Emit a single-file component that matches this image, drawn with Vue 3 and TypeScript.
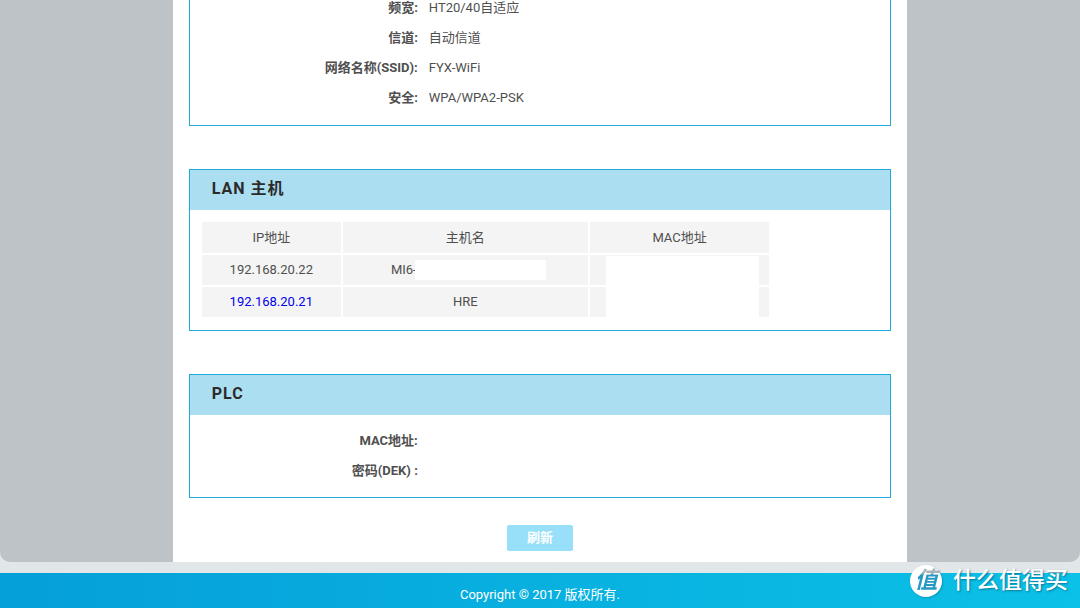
<script setup lang="ts">
interface Field {
  label: string
  value: string
}
interface Host {
  ip: string
  name: string
  current: boolean
  masked: boolean
}

const wifi: Field[] = [
  { label: '频宽:', value: 'HT20/40自适应' },
  { label: '信道:', value: '自动信道' },
  { label: '网络名称(SSID):', value: 'FYX-WiFi' },
  { label: '安全:', value: 'WPA/WPA2-PSK' },
]

const hosts: Host[] = [
  { ip: '192.168.20.22', name: 'MI6-', current: false, masked: true },
  { ip: '192.168.20.21', name: 'HRE', current: true, masked: false },
]

const plc: Field[] = [
  { label: 'MAC地址:', value: '' },
  { label: '密码(DEK) :', value: '' },
]
</script>

<template>
  <div class="page">
    <div class="backdrop">
      <main class="content">
        <section class="panel wifi">
          <dl class="fields">
            <div v-for="f in wifi" :key="f.label" class="field">
              <dt>{{ f.label }}</dt>
              <dd>{{ f.value }}</dd>
            </div>
          </dl>
        </section>

        <section class="panel">
          <h2>LAN 主机</h2>
          <div class="hosts">
            <table>
              <colgroup>
                <col class="col-ip" />
                <col class="col-name" />
                <col class="col-mac" />
              </colgroup>
              <thead>
                <tr>
                  <th scope="col">IP地址</th>
                  <th scope="col">主机名</th>
                  <th scope="col">MAC地址</th>
                </tr>
              </thead>
              <tbody>
                <tr v-for="h in hosts" :key="h.ip">
                  <td :class="{ current: h.current }">{{ h.ip }}</td>
                  <td :class="{ masked: h.masked }">
                    {{ h.name }}<span v-if="h.masked" class="mask-name"></span>
                  </td>
                  <td class="mac"><span v-if="h.masked" class="mask-mac"></span></td>
                </tr>
              </tbody>
            </table>
          </div>
        </section>

        <section class="panel">
          <h2>PLC</h2>
          <dl class="fields plc">
            <div v-for="f in plc" :key="f.label" class="field">
              <dt>{{ f.label }}</dt>
              <dd>{{ f.value }}</dd>
            </div>
          </dl>
        </section>

        <div class="actions">
          <button type="button">刷新</button>
        </div>
      </main>
    </div>

    <footer>
      <p>Copyright © 2017 版权所有.</p>
    </footer>

    <div class="watermark">
      <span class="badge"><span class="glyph">值</span></span>
      <span class="brand">什么值得买</span>
    </div>
  </div>
</template>

<style>
body {
  margin: 0;
  background: #e1e6e9;
}
</style>

<style scoped>
.page {
  position: relative;
  height: 100vh;
  overflow: hidden;
  display: flex;
  flex-direction: column;
  background: #e1e6e9;
  color: #4f4f4f;
  font: 13px/20px Roboto, "Noto Sans CJK SC", sans-serif;
}
.backdrop {
  flex-shrink: 0;
  background: #bec3c7;
  border-radius: 0 0 10px 10px;
}
.content {
  box-sizing: border-box;
  width: 68%;
  margin: 0 auto;
  padding: 0 16px 11px;
  background: #fff;
}
.panel {
  border: 1px solid #22aadc;
  margin-bottom: 43px;
}
.wifi {
  border-top: 0;
}
h2 {
  margin: 0;
  padding: 0 22px;
  height: 40px;
  background: #abdef1;
  color: #2b2b2b;
  font-size: 16px;
  line-height: 38px;
  font-weight: 700;
  letter-spacing: 1px;
}
.fields {
  margin: 0;
  padding: 0 0 12px;
}
.fields.plc {
  padding: 11px 0;
}
.field {
  display: flex;
  gap: 11px;
  line-height: 30px;
  min-height: 30px;
}
.wifi .field:first-child {
  margin-top: -7px;
}
dt {
  width: 228px;
  text-align: right;
  font-weight: 700;
}
dd {
  margin: 0;
}
.hosts {
  padding: 10px 10px 11px;
}
table {
  width: 84%;
  table-layout: fixed;
  border-collapse: separate;
  border-spacing: 2px;
}
th,
td {
  height: 30px;
  padding: 0;
  background: #f4f4f4;
  font-weight: 400;
  text-align: center;
}
th {
  height: 31px;
}
.col-ip {
  width: 139px;
}
.col-name {
  width: 245px;
}
.current {
  color: #0000ee;
}
.masked {
  padding-left: 6px;
}
.mac {
  position: relative;
}
.mask-name {
  display: inline-block;
  width: 131px;
  height: 20px;
  margin-left: -2px;
  background: #fff;
  vertical-align: top;
}
.mask-mac {
  position: absolute;
  z-index: 1;
  top: 1px;
  left: 16px;
  width: 153px;
  height: 61px;
  background: #fff;
}
.actions {
  margin-top: -16px;
  text-align: center;
}
button {
  width: 66px;
  height: 26px;
  padding: 0;
  border: 0;
  border-radius: 2px;
  background: #98e0fa;
  color: #fff;
  font: 700 13px/26px Roboto, "Noto Sans CJK SC", sans-serif;
}
footer {
  flex: 1;
  margin-top: 11px;
  background: linear-gradient(90deg, #059fd9, #0bc1e6);
  color: #fff;
  text-align: center;
}
footer p {
  margin: 0;
  padding-top: 12px;
}
.watermark {
  position: absolute;
  right: 12px;
  bottom: 11px;
  display: flex;
  align-items: center;
  gap: 11px;
  color: #fff;
}
.badge {
  width: 32px;
  height: 32px;
  border-radius: 50%;
  background: #fff;
  text-align: center;
  box-shadow: 1px 1px 2px rgba(0, 70, 100, 0.3);
}
.glyph {
  display: block;
  background: linear-gradient(#a9b4ba 25%, #2599c4 32%);
  background-clip: text;
  -webkit-background-clip: text;
  color: transparent;
  font-size: 23px;
  font-style: italic;
  font-weight: 700;
  line-height: 32px;
}
.brand {
  font-size: 23px;
  line-height: 32px;
  font-weight: 500;
  text-shadow: 1px 1px 2px rgba(0, 70, 100, 0.6);
}
</style>
